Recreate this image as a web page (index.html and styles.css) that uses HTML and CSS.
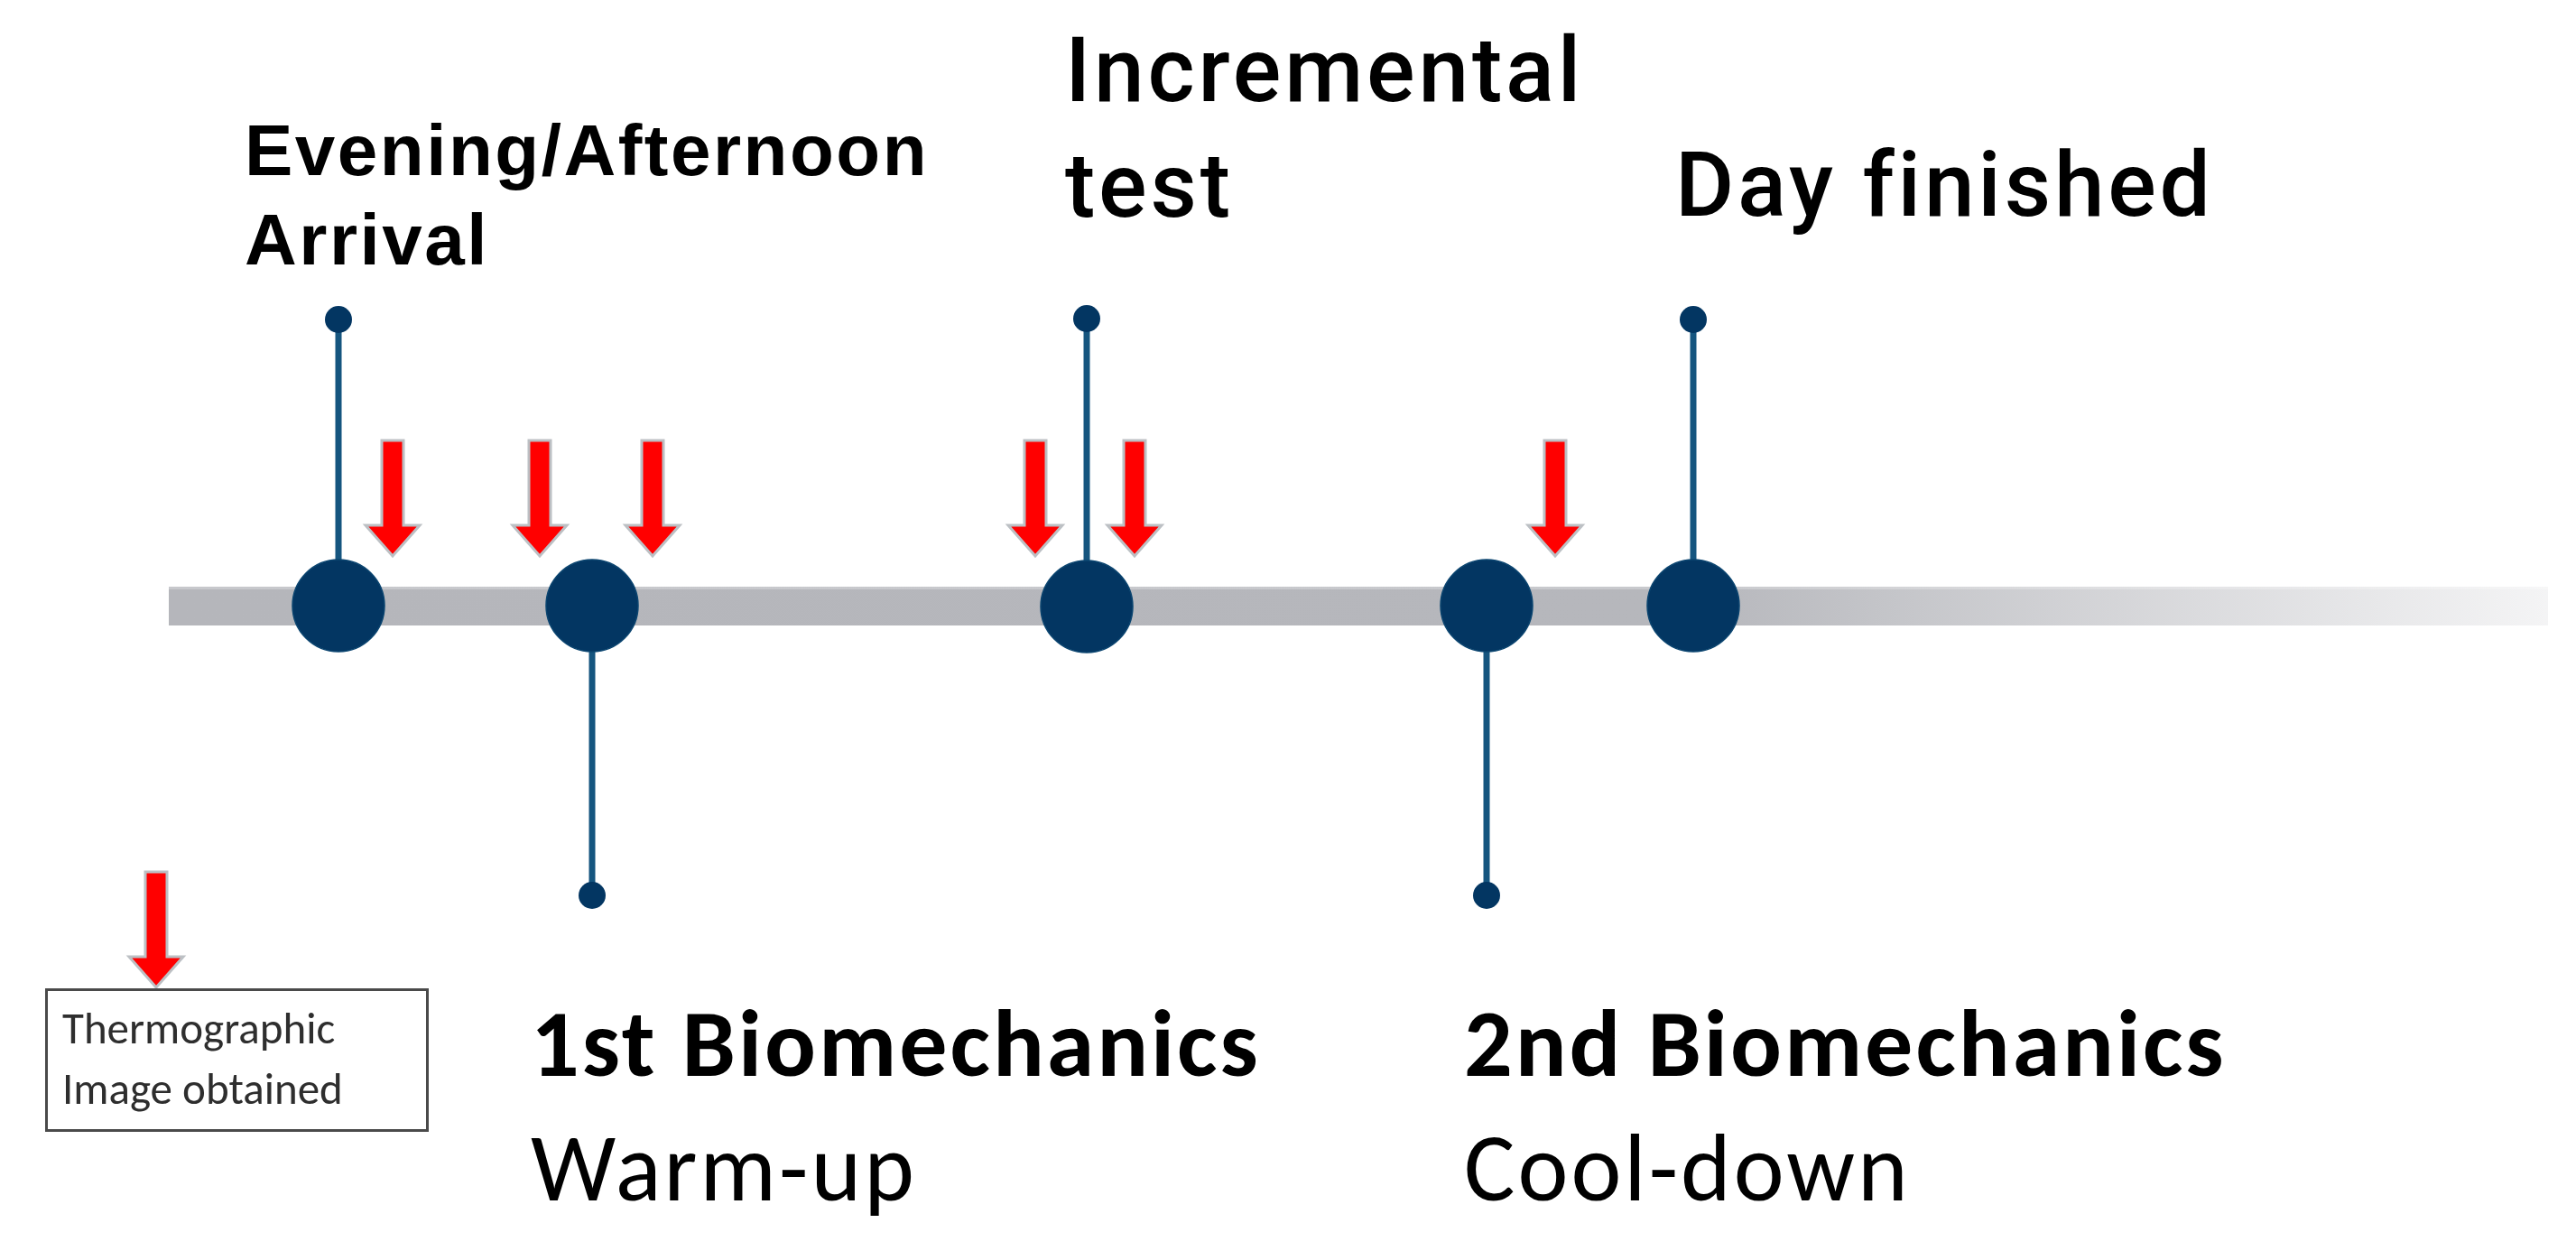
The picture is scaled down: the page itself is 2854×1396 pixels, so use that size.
FILE: index.html
```html
<!DOCTYPE html>
<html lang="en">
<head>
<meta charset="utf-8">
<title>Protocol timeline</title>
<link rel="stylesheet" href="styles.css">
</head>
<body>
<main class="canvas">
  <svg class="diagram" width="2854" height="1396" viewBox="0 0 2854 1396" aria-hidden="true">
    <defs>
      <linearGradient id="barFade" gradientUnits="userSpaceOnUse" x1="187" y1="0" x2="2823" y2="0">
        <stop offset="0" stop-color="#b5b6bb"/>
        <stop offset="0.64" stop-color="#b6b7bc"/>
        <stop offset="1" stop-color="#f4f4f5"/>
      </linearGradient>
      <symbol id="arrow" viewBox="-34 -4 68 136" overflow="visible">
        <polygon points="-12,0 12,0 12,94 30,94 0,128 -30,94 -12,94" fill="#ff0000" stroke="#bcc0c4" stroke-width="3" stroke-linejoin="miter"/>
      </symbol>
    </defs>

    <!-- timeline bar -->
    <rect x="187" y="650" width="2636" height="43" fill="url(#barFade)"/>
    <rect x="187" y="650" width="2636" height="3" fill="#ffffff" opacity="0.25"/>

    <!-- stems -->
    <g class="stems">
      <line x1="375" y1="354" x2="375" y2="671"/>
      <line x1="1204" y1="354" x2="1204" y2="671"/>
      <line x1="1876" y1="354" x2="1876" y2="671"/>
      <line x1="656" y1="671" x2="656" y2="992"/>
      <line x1="1647" y1="671" x2="1647" y2="992"/>
    </g>

    <!-- end dots -->
    <g class="dots">
      <circle cx="375" cy="354" r="15"/>
      <circle cx="1204" cy="353" r="15"/>
      <circle cx="1876" cy="354" r="15"/>
      <circle cx="656" cy="992" r="15"/>
      <circle cx="1647" cy="992" r="15"/>
    </g>

    <!-- event nodes -->
    <g class="nodes">
      <circle cx="375" cy="671" r="51"/>
      <circle cx="656" cy="671" r="51"/>
      <circle cx="1204" cy="672" r="51"/>
      <circle cx="1647" cy="671" r="51"/>
      <circle cx="1876" cy="671" r="51"/>
    </g>

    <!-- thermographic image arrows -->
    <use href="#arrow" x="401" y="484" width="68" height="136"/>
    <use href="#arrow" x="564" y="484" width="68" height="136"/>
    <use href="#arrow" x="689" y="484" width="68" height="136"/>
    <use href="#arrow" x="1113" y="484" width="68" height="136"/>
    <use href="#arrow" x="1223" y="484" width="68" height="136"/>
    <use href="#arrow" x="1689" y="484" width="68" height="136"/>
    <use href="#arrow" x="139" y="962" width="68" height="136"/>
  </svg>

  <div class="label label-arrival">Evening/Afternoon<br>Arrival</div>
  <div class="label label-incremental">Incremental<br>test</div>
  <div class="label label-finished">Day finished</div>

  <div class="phase phase-first">
    <div class="phase-title">1st Biomechanics</div>
    <div class="phase-sub">Warm-up</div>
  </div>
  <div class="phase phase-second">
    <div class="phase-title">2nd Biomechanics</div>
    <div class="phase-sub">Cool-down</div>
  </div>

  <div class="legend">
    <span>Thermographic</span>
    <span>Image obtained</span>
  </div>
</main>
</body>
</html>
```
FILE: styles.css
```css
html, body {
  margin: 0;
  padding: 0;
  background: #ffffff;
}

.canvas {
  position: relative;
  width: 2854px;
  height: 1396px;
  overflow: hidden;
  background: #ffffff;
  color: #000000;
}

.diagram {
  position: absolute;
  left: 0;
  top: 0;
  display: block;
}

.stems line {
  stroke: #15557f;
  stroke-width: 7;
}

.dots circle,
.nodes circle {
  fill: #033662;
}

.nodes circle {
  stroke: #0b4570;
  stroke-width: 1.5;
}

.label {
  position: absolute;
  white-space: nowrap;
}

.label-arrival {
  left: 271px;
  top: 117px;
  font-family: "Liberation Sans", Arial, sans-serif;
  font-weight: 700;
  font-size: 80px;
  line-height: 99px;
  letter-spacing: 2.5px;
}

.label-incremental,
.label-finished {
  font-family: Roboto, "Noto Sans", sans-serif;
  font-weight: 500;
  font-size: 100px;
  line-height: 128px;
  letter-spacing: 3.8px;
}

.label-incremental {
  left: 1180px;
  top: 14px;
}

.label-finished {
  left: 1856px;
  top: 141px;
}

.phase {
  position: absolute;
  top: 1087px;
  display: flex;
  flex-direction: column;
  font-family: Carlito, Lato, "Open Sans", sans-serif;
  font-size: 106px;
  line-height: 138px;
  letter-spacing: 3px;
  white-space: nowrap;
}

.phase-first {
  left: 588px;
}

.phase-second {
  left: 1622px;
}

.phase-title {
  font-weight: 700;
}

.phase-sub {
  font-weight: 400;
}

.legend {
  position: absolute;
  left: 50px;
  top: 1095px;
  width: 419px;
  height: 153px;
  border: 3px solid #4a4a4a;
  box-sizing: content-box;
  display: flex;
  flex-direction: column;
  padding: 0;
  font-family: Carlito, Lato, "Open Sans", sans-serif;
  font-size: 49px;
  line-height: 67px;
  color: #2e2e2e;
}

.legend span {
  display: block;
  padding-left: 16px;
}

.legend span:first-child {
  margin-top: 8px;
}
```
